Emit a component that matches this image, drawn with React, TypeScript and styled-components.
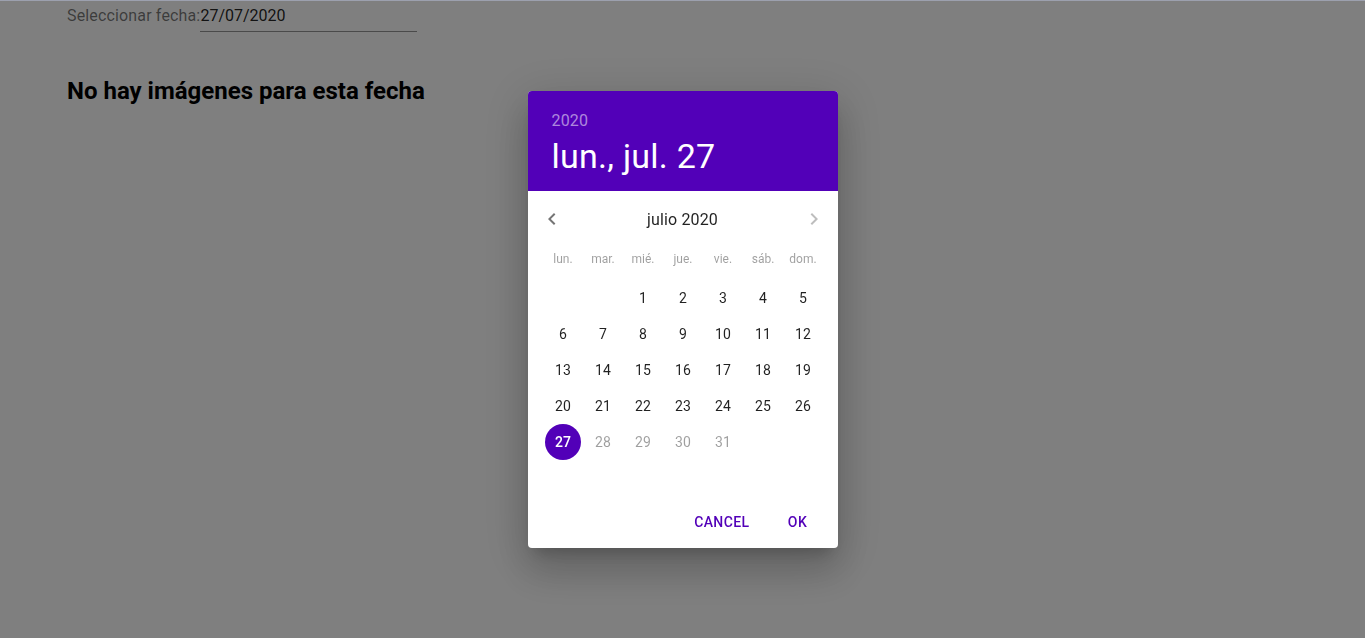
import React from "react";
import styled, { createGlobalStyle } from "styled-components";

const PURPLE = "#5200b8";

const GlobalStyle = createGlobalStyle`
  html, body {
    margin: 0;
    padding: 0;
    background: #fff;
    font-family: Roboto, "Helvetica Neue", Arial, sans-serif;
  }
`;

const TopLine = styled.div`
  height: 1px;
  background: #9ca0ae;
`;

const Main = styled.main`
  padding: 0 67px;
`;

const FieldRow = styled.div`
  display: flex;
  align-items: center;
  height: 31px;
  margin-top: -1px;
`;

const Label = styled.label`
  font-size: 16px;
  letter-spacing: 0.00938em;
  color: rgba(0, 0, 0, 0.54);
`;

const DateInput = styled.div`
  width: 217px;
  height: 32px;
  box-sizing: border-box;
  padding: 6px 0 7px;
  font-size: 16px;
  line-height: 19px;
  color: rgba(0, 0, 0, 0.87);
  border-bottom: 1px solid rgba(0, 0, 0, 0.42);
`;

const Heading = styled.h2`
  margin: 44px 0 0;
  font-size: 24px;
  font-weight: 700;
  line-height: 32px;
  color: #000;
`;

const Backdrop = styled.div`
  position: fixed;
  top: 1px;
  left: 0;
  right: 0;
  bottom: 0;
  background: rgba(0, 0, 0, 0.5);
  display: flex;
  align-items: center;
  justify-content: center;
`;

const Paper = styled.div`
  width: 310px;
  margin-top: -1px;
  background: #fff;
  border-radius: 4px;
  overflow: hidden;
  box-shadow: 0px 11px 15px -7px rgba(0, 0, 0, 0.2),
    0px 24px 38px 3px rgba(0, 0, 0, 0.14), 0px 9px 46px 8px rgba(0, 0, 0, 0.12);
`;

const Toolbar = styled.div`
  height: 100px;
  box-sizing: border-box;
  background: ${PURPLE};
  padding: 2px 24px 0;
  display: flex;
  flex-direction: column;
  justify-content: center;
  align-items: flex-start;
`;

const Year = styled.div`
  font-size: 16px;
  line-height: 28px;
  letter-spacing: 0.00938em;
  color: rgba(255, 255, 255, 0.54);
`;

const BigDate = styled.div`
  font-size: 34px;
  line-height: 42px;
  letter-spacing: 0.00735em;
  color: #fff;
`;

const PickerView = styled.div`
  min-height: 305px;
  display: flex;
  flex-direction: column;
  justify-content: center;
`;

const SwitchHeader = styled.div`
  display: flex;
  align-items: center;
  justify-content: space-between;
  margin: 4px 0 8px;
`;

const ArrowButton = styled.button<{ $disabled?: boolean }>`
  width: 48px;
  height: 48px;
  padding: 12px;
  border: 0;
  background: transparent;
  display: flex;
  color: ${(p) => (p.$disabled ? "rgba(0,0,0,0.26)" : "rgba(0,0,0,0.54)")};
  svg {
    width: 24px;
    height: 24px;
    fill: currentColor;
  }
`;

const MonthTitle = styled.div`
  font-size: 16px;
  letter-spacing: 0.00938em;
  color: rgba(0, 0, 0, 0.87);
  line-height: 23px;
`;

const Week = styled.div`
  display: flex;
  justify-content: center;
  padding-left: 1px;
`;

const DayLabel = styled.span`
  width: 36px;
  margin: 0 2px;
  text-align: center;
  font-size: 12px;
  line-height: 16px;
  color: rgba(0, 0, 0, 0.38);
`;

const Days = styled.div`
  margin-top: 13px;
  min-height: 215px;
`;

const Day = styled.span<{ $state?: "normal" | "disabled" | "selected" | "empty" }>`
  width: 36px;
  height: 36px;
  margin: 0 2px;
  border-radius: 50%;
  display: flex;
  align-items: center;
  justify-content: center;
  font-size: 14px;
  letter-spacing: 0.01071em;
  font-weight: ${(p) => (p.$state === "selected" ? 500 : 400)};
  background: ${(p) => (p.$state === "selected" ? PURPLE : "transparent")};
  color: ${(p) =>
    p.$state === "selected"
      ? "#fff"
      : p.$state === "disabled"
      ? "rgba(0,0,0,0.38)"
      : "rgba(0,0,0,0.87)"};
`;

const Actions = styled.div`
  display: flex;
  justify-content: flex-end;
  gap: 8px;
  padding: 8px;
`;

const TextButton = styled.button`
  min-width: 64px;
  height: 36px;
  padding: 6px 8px;
  border: 0;
  background: transparent;
  font-family: Roboto, sans-serif;
  font-size: 14px;
  font-weight: 500;
  letter-spacing: 0.02857em;
  text-transform: uppercase;
  color: ${PURPLE};
`;

const labels = ["lun.", "mar.", "mié.", "jue.", "vie.", "sáb.", "dom."];

const weeks: (number | null)[][] = [
  [null, null, 1, 2, 3, 4, 5],
  [6, 7, 8, 9, 10, 11, 12],
  [13, 14, 15, 16, 17, 18, 19],
  [20, 21, 22, 23, 24, 25, 26],
  [27, 28, 29, 30, 31, null, null],
];

const dayState = (d: number | null) => {
  if (d === null) return "empty";
  if (d === 27) return "selected";
  if (d > 27) return "disabled";
  return "normal";
};

export default function App() {
  return (
    <>
      <GlobalStyle />
      <TopLine />
      <Main>
        <FieldRow>
          <Label>Seleccionar fecha:</Label>
          <DateInput>27/07/2020</DateInput>
        </FieldRow>
        <Heading>No hay imágenes para esta fecha</Heading>
      </Main>
      <Backdrop>
        <Paper>
          <Toolbar>
            <Year>2020</Year>
            <BigDate>lun., jul. 27</BigDate>
          </Toolbar>
          <PickerView>
            <SwitchHeader>
              <ArrowButton>
                <svg viewBox="0 0 24 24">
                  <path d="M15.41 16.59L10.83 12l4.58-4.59L14 6l-6 6 6 6 1.41-1.41z" />
                </svg>
              </ArrowButton>
              <MonthTitle>julio 2020</MonthTitle>
              <ArrowButton $disabled>
                <svg viewBox="0 0 24 24">
                  <path d="M8.59 16.59L13.17 12 8.59 7.41 10 6l6 6-6 6-1.41-1.41z" />
                </svg>
              </ArrowButton>
            </SwitchHeader>
            <Week>
              {labels.map((l) => (
                <DayLabel key={l}>{l}</DayLabel>
              ))}
            </Week>
            <Days>
              {weeks.map((w, i) => (
                <Week key={i}>
                  {w.map((d, j) => (
                    <Day key={j} $state={dayState(d)}>
                      {d ?? ""}
                    </Day>
                  ))}
                </Week>
              ))}
            </Days>
          </PickerView>
          <Actions>
            <TextButton>Cancel</TextButton>
            <TextButton>OK</TextButton>
          </Actions>
        </Paper>
      </Backdrop>
    </>
  );
}
